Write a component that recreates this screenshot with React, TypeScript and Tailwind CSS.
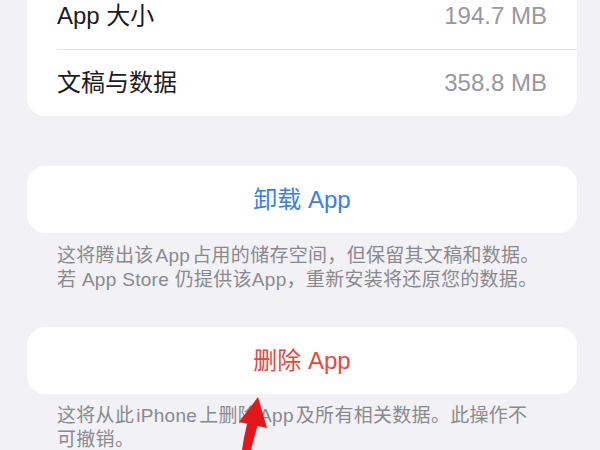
const font = { fontFamily: '"Liberation Sans", "Noto Sans CJK SC", sans-serif' };

function InfoRow({ label, value }: { label: string; value: string }) {
  return (
    <div className="flex h-[66px] items-center justify-between pr-[30px]">
      <span className="text-[24px] text-[#1c1c1e]">{label}</span>
      <span className="text-[24px] text-[#98989d]">{value}</span>
    </div>
  );
}

function ActionCard({ label, color }: { label: string; color: string }) {
  return (
    <div className="flex h-[67px] items-center justify-center rounded-[18px] bg-white">
      <span className={`text-[24px] ${color}`}>{label}</span>
    </div>
  );
}

function Arrow() {
  return (
    <svg
      className="pointer-events-none absolute left-[230px] top-[390px]"
      width="50"
      height="60"
      viewBox="0 0 50 60"
    >
      {/* shaft */}
      <path d="M17 34 L28 34 Q24 48 21 60 L12 60 Q14 46 17 34 Z" fill="#e3161b" />
      {/* head */}
      <path d="M28 7 L9 32 L37 38 Z" fill="#e3161b" />
    </svg>
  );
}

export default function App() {
  return (
    <div className="relative h-[450px] w-[600px] overflow-hidden bg-[#f1f1f6]" style={font}>
      <div className="pl-[27px] pr-[23px]">
        {/* storage info */}
        <div className="mt-[-17px] rounded-b-[18px] bg-white pl-[30px]">
          <InfoRow label="App 大小" value="194.7 MB" />
          <div className="h-px bg-[#e2e2e7]" />
          <InfoRow label="文稿与数据" value="358.8 MB" />
        </div>

        {/* offload */}
        <div className="mt-[50px]">
          <ActionCard label="卸载 App" color="text-[#3a7ee8]" />
          <p className="pl-[30px] pt-[11px] text-[19px] leading-[24px] tracking-[0.3px] text-[#8a8a8e]">
            这将腾出该<span className="mx-[2px]">App</span>占用的储存空间，但保留其文稿和数据。
            <br />
            若 App Store 仍提供该App，重新安装将还原您的数据。
          </p>
        </div>

        {/* delete */}
        <div className="mt-[35px]">
          <ActionCard label="删除 App" color="text-[#e5483f]" />
          <p className="pl-[30px] pt-[10px] text-[19px] leading-[24px] tracking-[0.3px] text-[#8a8a8e]">
            这将从此<span className="mx-[2px]">iPhone</span>上删除<span className="mx-[2px]">App</span>及所有相关数据。此操作不
            <br />
            可撤销。
          </p>
        </div>
      </div>
      <Arrow />
    </div>
  );
}
